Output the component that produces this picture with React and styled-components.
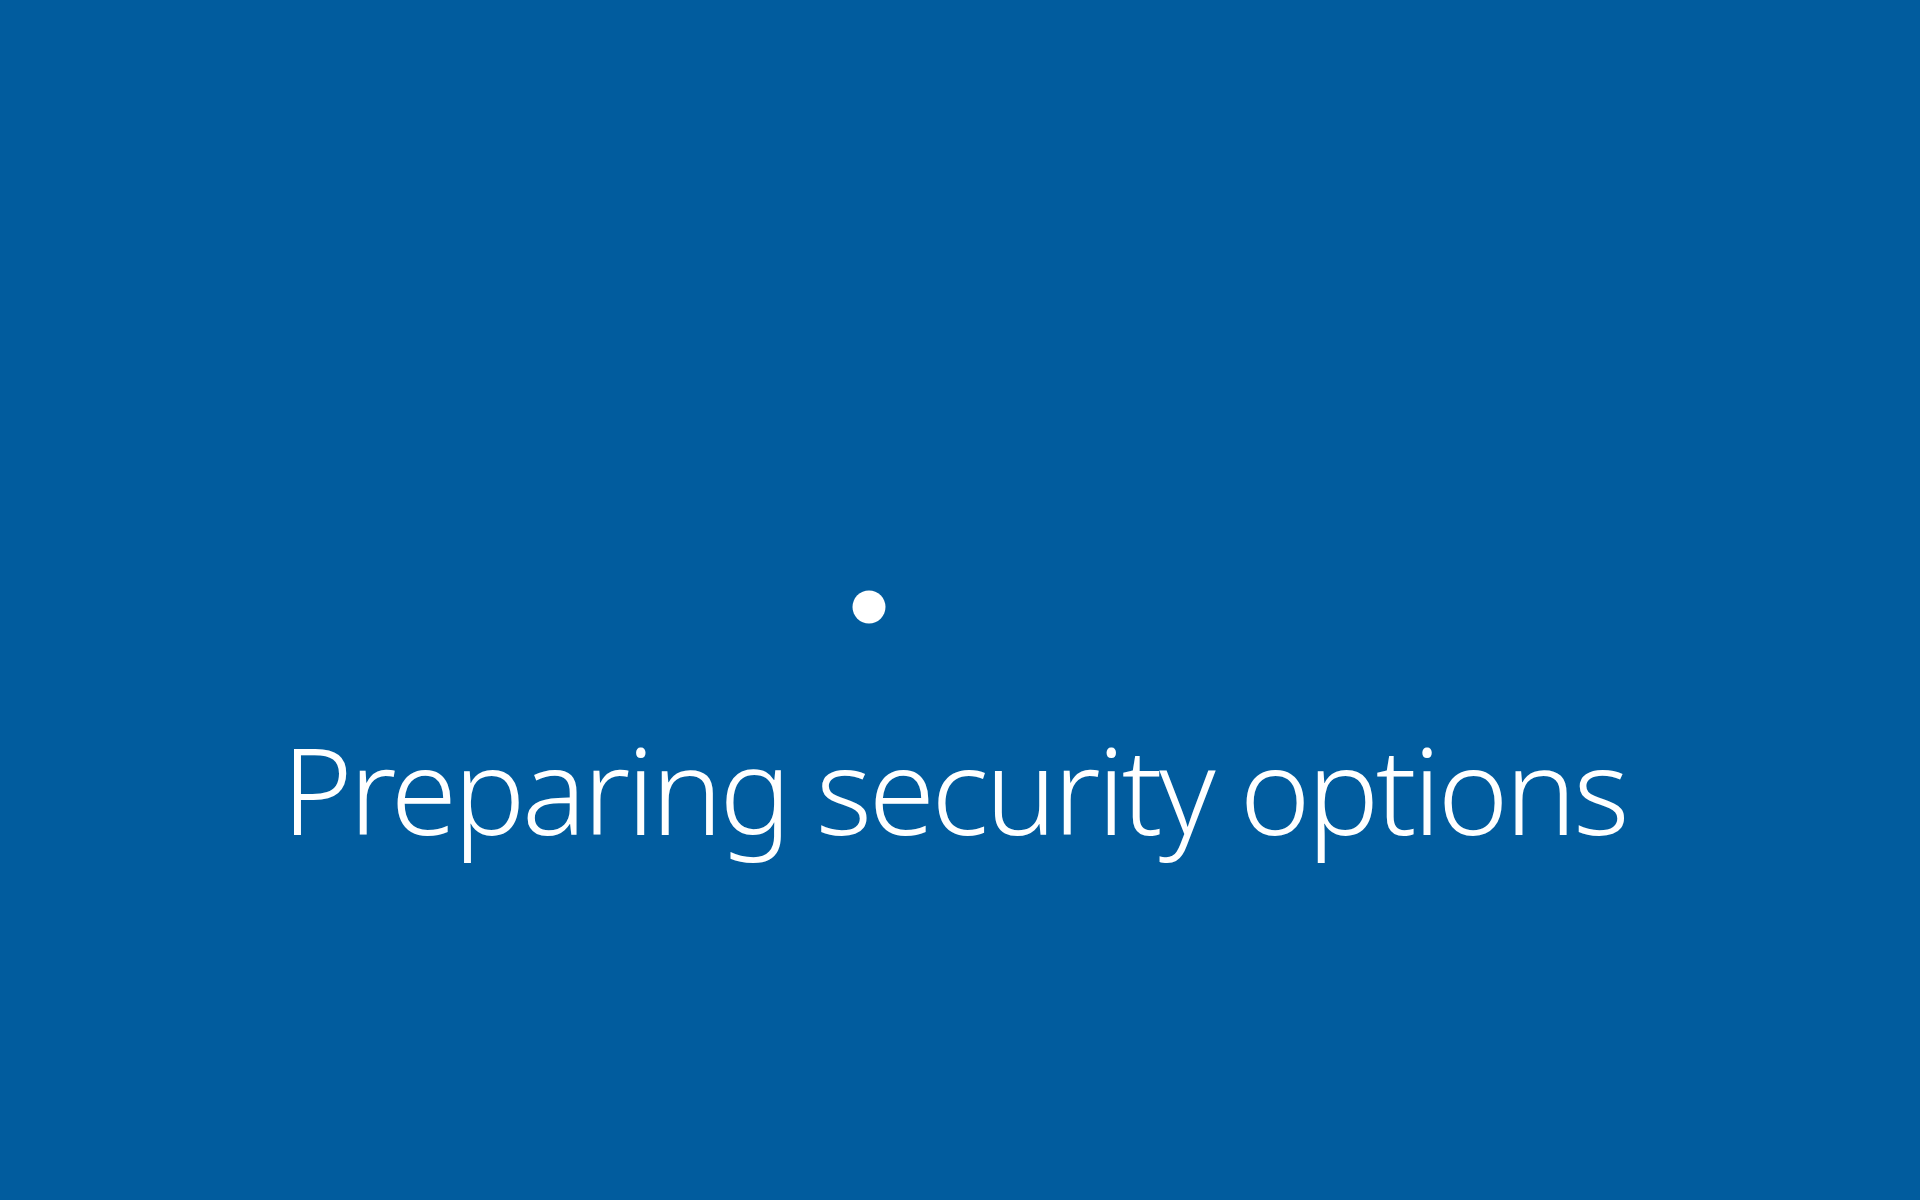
import React from "react";
import styled, { createGlobalStyle } from "styled-components";

const Global = createGlobalStyle`
  html, body { margin: 0; padding: 0; height: 100%; }
  body { background: #015c9e; }
  #root { height: 100%; }
`;

const Screen = styled.main`
  width: 1920px;
  height: 1200px;
  background: #015c9e;
  display: flex;
  flex-direction: column;
  align-items: center;
  padding-top: 517px;
  box-sizing: border-box;
  overflow: hidden;
`;

const Spinner = styled.svg`
  display: block;
  width: 240px;
  height: 200px;
`;

const Message = styled.h1`
  margin: 0 12px 0 0;
  font-family: "Noto Sans", "Open Sans", sans-serif;
  font-weight: 300;
  font-size: 120px;
  line-height: 1.2;
  color: #ffffff;
  letter-spacing: -3.4px;
  white-space: nowrap;
`;

export default function App() {
  return (
    <>
      <Global />
      <Screen>
        <Spinner viewBox="0 0 240 200" aria-hidden="true">
          <circle cx="29" cy="90" r="16.5" fill="#ffffff" />
        </Spinner>
        <Message>Preparing security options</Message>
      </Screen>
    </>
  );
}
